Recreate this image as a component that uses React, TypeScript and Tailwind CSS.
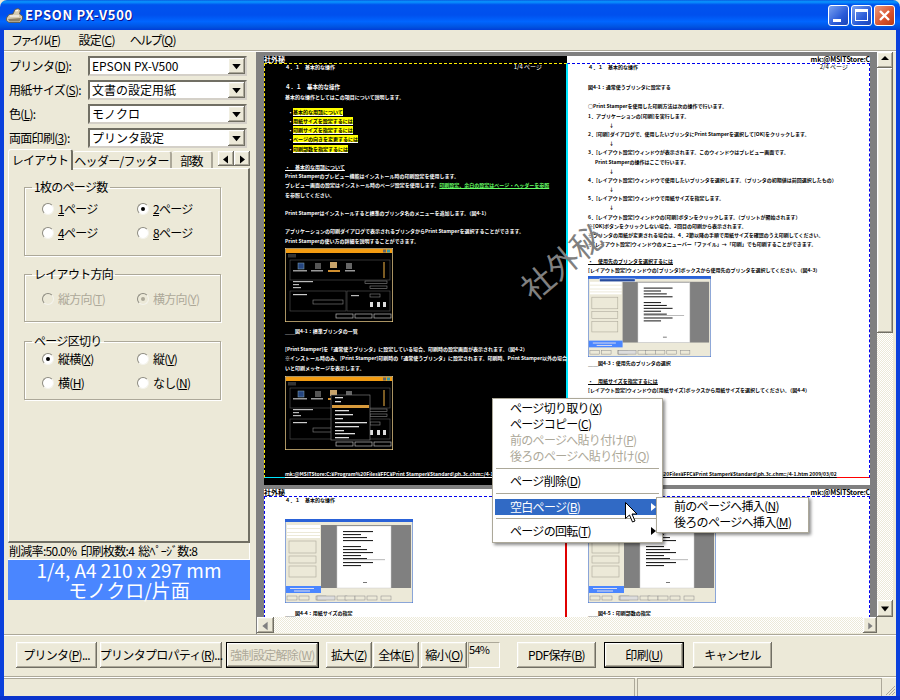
import React from 'react';

const raised = 'bg-[#ece9d8] shadow-[inset_-1px_-1px_#716f64,inset_1px_1px_#fff,inset_-2px_-2px_#aca899,inset_2px_2px_#f1efe2]';

const Combo: React.FC<{ label: React.ReactNode; value: string }> = ({ label, value }) => (
  <div className="flex items-center h-[20px] mb-[4px]">
    <div className="w-[80px] pl-[1px] text-[12px] whitespace-nowrap">{label}</div>
    <div className="w-[159px] h-[20px] flex items-center bg-white border-2 border-t-[#716f64] border-l-[#716f64] border-r-[#d4d0c8] border-b-[#d4d0c8]">
      <span className="flex-1 pl-[2px] text-[12px] leading-[16px] tracking-normal whitespace-nowrap">{value}</span>
      <Arrow dir="down" className="w-[17px] h-[16px]" />
    </div>
  </div>
);

const Arrow: React.FC<{ dir: 'up' | 'down' | 'left' | 'right'; className?: string; disabled?: boolean }> = ({ dir, className, disabled }) => {
  const pts = { up: '4,7 12,7 8,3', down: '4,5 12,5 8,10', left: '10,4 10,12 5,8', right: '6,4 6,12 11,8' }[dir];
  return (
    <div className={`${raised} shrink-0 ${className}`}>
      <svg viewBox="0 0 16 14" className="w-full h-full">
        <polygon points={pts} fill={disabled ? '#808080' : '#000'} />
      </svg>
    </div>
  );
};

const Radio: React.FC<{ on?: boolean; off?: boolean; children: React.ReactNode }> = ({ on, off, children }) => (
  <div className={`flex items-center h-[24px] text-[12px] whitespace-nowrap ${off ? 'text-[#aca899]' : ''}`}>
    <div className={`w-[12px] h-[12px] rounded-full border border-t-[#8d8b80] border-l-[#8d8b80] border-r-[#f4f3ec] border-b-[#f4f3ec] flex items-center justify-center mr-[4px] ${off ? 'bg-[#ece9d8]' : 'bg-white'}`}>
      {on && <div className={`w-[4px] h-[4px] rounded-full ${off ? 'bg-[#aca899]' : 'bg-black'}`} />}
    </div>
    <span>{children}</span>
  </div>
);

const Group: React.FC<{ title: string; className: string; children: React.ReactNode }> = ({ title, className, children }) => (
  <fieldset className={`w-[197px] ml-[15px] border border-[#aca899] shadow-[1px_1px_#fff,inset_1px_1px_#fff] ${className}`}>
    <legend className="ml-[7px] px-[2px] text-[12px] leading-[14px]">{title}</legend>
    {children}
  </fieldset>
);

const Btn: React.FC<{ className: string; disabled?: boolean; def?: boolean; children: React.ReactNode }> = ({ className, disabled, def, children }) => (
  <div className={`${raised} h-[26px] flex items-center justify-center text-[12px] whitespace-nowrap ${def ? 'border border-black' : ''} ${disabled ? 'text-[#aca899]' : ''} ${className}`}>
    {children}
  </div>
);

const Row: React.FC<{ className?: string; children?: React.ReactNode }> = ({ className = '', children }) => (
  <div className={`h-[9.2px] leading-[9.2px] text-[5px] tracking-normal font-bold whitespace-nowrap ${className}`}>{children}</div>
);

const Mark: React.FC<{ children: React.ReactNode }> = ({ children }) => (
  <Row><span className="text-white">・</span><span className="bg-[#ffff00] text-black border-b border-white">{children}</span></Row>
);

const DarkShot: React.FC<{ menu?: boolean }> = ({ menu }) => (
  <svg viewBox="0 0 108 74" className="w-[108px] h-[74px] shrink-0 block">
    <rect width="108" height="74" fill="#000" stroke="#f1d28d" strokeWidth="1.4" />
    <rect x="1" y="1" width="106" height="4" fill="#f39c12" />
    <rect x="98" y="1.5" width="3" height="3" fill="#666" />
    <rect x="102" y="1.5" width="3" height="3" fill="#39a" />
    <rect x="3" y="6" width="8" height="3.5" fill="#333" />
    <rect x="5" y="12" width="100" height="20" fill="none" stroke="#555" strokeWidth="0.6" />
    <rect x="13" y="15" width="6" height="6" fill="#25457f" stroke="#8ab" strokeWidth="0.5" />
    <rect x="30" y="15" width="6" height="6" fill="#555" />
    <rect x="45" y="14" width="7" height="6" fill="#c8a36a" />
    <rect x="43" y="22" width="12" height="2" fill="#d18f2f" />
    <rect x="61" y="15" width="6" height="6" fill="#666" />
    <rect x="98" y="14" width="2" height="16" fill="#7b5b22" />
    <rect x="8" y="22" width="14" height="1.5" fill="#999" />
    <rect x="26" y="22" width="12" height="1.5" fill="#999" />
    <rect x="60" y="22" width="10" height="1.5" fill="#999" />
    <rect x="8" y="33" width="20" height="1.2" fill="#bbb" />
    <rect x="8" y="36" width="6" height="1.2" fill="#bbb" />
    <rect x="8" y="39" width="8" height="1.2" fill="#bbb" />
    <rect x="80" y="33" width="22" height="2.6" fill="none" stroke="#888" strokeWidth="0.6" />
    <rect x="85" y="38" width="17" height="2.6" fill="none" stroke="#888" strokeWidth="0.6" />
    <rect x="5" y="43" width="56" height="20" fill="none" stroke="#555" strokeWidth="0.6" />
    <rect x="62" y="43" width="43" height="20" fill="none" stroke="#555" strokeWidth="0.6" />
    <rect x="8" y="46" width="14" height="1.2" fill="#ccc" />
    <rect x="28" y="52" width="30" height="4" fill="none" stroke="#888" strokeWidth="0.6" />
    <rect x="66" y="47" width="8" height="1.2" fill="#bbb" />
    <rect x="85" y="46" width="10" height="3" fill="none" stroke="#888" strokeWidth="0.6" />
    <rect x="85" y="54" width="3" height="5" fill="#ddd" />
    <rect x="92" y="54" width="3" height="5" fill="#ddd" />
    <rect x="98" y="54" width="3" height="5" fill="#ddd" />
    <rect x="51" y="66" width="17" height="4" fill="none" stroke="#bbb" strokeWidth="0.7" />
    <rect x="70" y="66" width="17" height="4" fill="none" stroke="#bbb" strokeWidth="0.7" />
    <rect x="89" y="66" width="17" height="4" fill="none" stroke="#bbb" strokeWidth="0.7" />
    {menu && (
      <g>
        <rect x="46" y="19" width="39" height="45" fill="#000" stroke="#888" strokeWidth="0.6" />
        <rect x="47" y="29" width="37" height="3" fill="#d89a3c" />
        <rect x="50" y="21" width="8" height="1.3" fill="#ddd" />
        <rect x="50" y="25" width="6" height="1.3" fill="#ddd" />
        <rect x="50" y="34" width="14" height="1.3" fill="#ddd" />
        <rect x="50" y="38" width="18" height="1.3" fill="#ddd" />
        <rect x="50" y="42" width="8" height="1.3" fill="#ddd" />
        <rect x="50" y="46" width="32" height="1.3" fill="#ddd" />
        <rect x="50" y="50" width="24" height="1.3" fill="#ddd" />
        <rect x="50" y="54" width="9" height="1.3" fill="#ddd" />
        <rect x="50" y="57" width="20" height="1.3" fill="#ddd" />
        <rect x="50" y="61" width="14" height="1.3" fill="#ddd" />
      </g>
    )}
  </svg>
);

const LightShot: React.FC<{ w: string; menu?: boolean }> = ({ w, menu }) => (
  <svg viewBox="0 0 128 84" preserveAspectRatio="none" className={`${w} shrink-0 block`}>
    <rect width="128" height="84" fill="#ece9d8" />
    <rect width="128" height="3" fill="#2a62d8" />
    <rect x="0" y="0" width="128" height="84" fill="none" stroke="#2a62d8" strokeWidth="1" />
    <rect x="36" y="6" width="90" height="63" fill="#808080" />
    <rect x="52" y="7" width="54" height="62" fill="#fff" stroke="#ccc" strokeWidth="0.5" />
    {[12, 15, 18, 21, 27, 30, 33, 36, 39, 43, 46].map((y, i) => (
      <rect key={y} x="58" y={y} width={i % 3 === 0 ? 30 : i % 3 === 1 ? 18 : 24} height="1.1" fill="#222" />
    ))}
    <rect x="58" y="40.5" width="42" height="0.6" fill="#888" />
    <rect x="78" y="63" width="4" height="0.8" fill="#555" />
    <rect x="2" y="6" width="33" height="3" fill="#fff" />
    <rect x="2" y="10" width="33" height="3" fill="#fff" />
    <rect x="2" y="14" width="33" height="2" fill="#fff" />
    <rect x="2" y="17" width="33" height="2" fill="#fff" />
    <rect x="4" y="22" width="27" height="12" fill="none" stroke="#aca899" strokeWidth="0.6" />
    <rect x="4" y="37" width="27" height="7" fill="none" stroke="#aca899" strokeWidth="0.6" />
    <rect x="4" y="47" width="27" height="11" fill="none" stroke="#aca899" strokeWidth="0.6" />
    <rect x="1" y="67" width="35" height="7" fill="#4a86ff" />
    <rect x="5" y="69" width="24" height="1" fill="#dde" />
    <rect x="9" y="71.5" width="16" height="1" fill="#dde" />
    {[2, 14, 31, 32, 52, 60, 70, 82, 96].map((x, i) => (
      <rect key={x} x={x} y="77" width={i === 3 ? 18 : 10} height="4" fill={i === 3 ? '#ddd' : '#ece9d8'} stroke="#888" strokeWidth="0.5" />
    ))}
    {menu && <rect x="12" y="3" width="37" height="3" fill="#264a9c" stroke="#fff" strokeWidth="0.5" />}
  </svg>
);

const Item: React.FC<{ off?: boolean; active?: boolean; sub?: boolean; children: React.ReactNode }> = ({ off, active, sub, children }) => (
  <div className={`relative h-[16px] flex items-center pl-[15px] text-[12px] whitespace-nowrap ${off ? 'text-[#aca899]' : ''} ${active ? 'bg-[#316ac5] text-white' : ''}`}>
    {children}
    {sub && (
      <svg viewBox="0 0 5 8" className="absolute right-[4px] top-[4px] w-[5px] h-[8px]">
        <polygon points="0,0 5,4 0,8" fill={active ? '#fff' : '#000'} />
      </svg>
    )}
  </div>
);

const Sep: React.FC<{ className: string }> = ({ className }) => <div className={`h-px bg-[#aca899] mx-[1px] ${className}`} />;

const FOOT = 'mk:@MSITStore:C:¥Program%20Files¥FFC¥Print Stamper¥Standard\\ph.3c.chm::/4-1.htm  2009/03/02';

export default function App() {
  return (
    <div className="relative w-[900px] h-[700px] overflow-hidden flex flex-col bg-[#ece9d8] text-black tracking-[-0.7px] font-['Noto_Sans_CJK_JP','Liberation_Sans',sans-serif]">
      {/* title bar */}
      <div className="h-[30px] shrink-0 flex items-center pl-[6px] pr-[5px] rounded-t-[7px] bg-[linear-gradient(#0a5ce0_0%,#0997ff_6%,#0053ee_16%,#0050ee_50%,#0066ff_72%,#0053e0_90%,#003dd7_100%)]">
        <svg viewBox="0 0 17 15" className="w-[17px] h-[15px] mr-[2px]">
          <path d="M0.5 10 L3 6.5 L7 6 L9 1.5 L12 0.5 L14.5 2 L13.5 6 L16.5 8 L16.5 11 L14 14.5 L3 14.5 L0.5 12.5 Z" fill="#d6cbb0" stroke="#5b513c" strokeWidth="0.8" />
          <path d="M2 11 L15 10 L13.5 13.5 L3.5 13.5 Z" fill="#8c8066" />
          <path d="M4 8 L13 8 M9.5 3 L12 2.5" stroke="#fff" strokeWidth="1.2" />
        </svg>
        <span className="text-[13px] font-bold text-white tracking-[0.7px] [text-shadow:1px_1px_#0f1089]">EPSON PX-V500</span>
        <div className="ml-auto flex gap-[2px]">
          <div className="w-[21px] h-[21px] rounded-[3px] border border-white bg-[linear-gradient(135deg,#7ba2f0,#2a5bd8_60%,#1a44b8)] flex items-end pl-[4px] pb-[3px]">
            <div className="w-[8px] h-[3px] bg-white" />
          </div>
          <div className="w-[21px] h-[21px] rounded-[3px] border border-white bg-[linear-gradient(135deg,#7ba2f0,#2a5bd8_60%,#1a44b8)] flex items-center justify-center">
            <div className="w-[13px] h-[12px] border border-white border-t-[3px]" />
          </div>
          <div className="w-[21px] h-[21px] rounded-[3px] border border-white bg-[linear-gradient(135deg,#eb9a7c,#d9512c_60%,#b83a15)] flex items-center justify-center">
            <svg viewBox="0 0 13 13" className="w-[13px] h-[13px]">
              <path d="M2 2 L11 11 M11 2 L2 11" stroke="#fff" strokeWidth="2.4" />
            </svg>
          </div>
        </div>
      </div>

      <div className="flex-1 min-h-0 flex flex-col border-x-4 border-[#0a40dc]">
        {/* menu */}
        <div className="h-[20px] shrink-0 flex items-center text-[12px]">
          <span className="ml-[7px]"><span className="tracking-[-2.8px]">ファイル</span>(<u>F</u>)</span>
          <span className="ml-[18px]">設定(<u>C</u>)</span>
          <span className="ml-[15px]"><span className="tracking-[-1.6px]">ヘルプ</span>(<u>Q</u>)</span>
        </div>
        <div className="h-[2px] shrink-0 border-t border-[#aca899] border-b border-b-white" />

        <div className="h-[582px] shrink-0 flex">
          {/* left column */}
          <div className="w-[253px] shrink-0 pt-[4px] pl-[4px] border-r border-[#808080]">
            <Combo label={<>プリンタ(<u>D</u>):</>} value="EPSON PX-V500" />
            <Combo label={<>用紙サイズ(<u>S</u>):</>} value="文書の設定用紙" />
            <Combo label={<>色(<u>L</u>):</>} value="モノクロ" />
            <Combo label={<>両面印刷(<u>3</u>):</>} value="プリンタ設定" />

            <div className="w-[242px] -mt-[3px] h-[19px] flex items-end text-[12px]">
              <div className="relative z-10 w-[65px] h-[21px] -mb-[2px] pt-[1px] text-center rounded-t-[3px] bg-[#ece9d8] border-l border-t border-white border-r-2 border-r-[#716f64]">レイアウト</div>
              <div className="w-[99px] h-[17px] text-center leading-[17px] rounded-t-[3px] border-t border-white border-r-2 border-r-[#aca899] whitespace-nowrap">ヘッダー/フッター</div>
              <div className="w-[41px] h-[17px] text-center leading-[17px] rounded-t-[3px] border-t border-white border-r-2 border-r-[#aca899]">部数</div>
              <div className="ml-auto self-start mt-[2px] flex">
                <Arrow dir="left" className="w-[16px] h-[15px]" />
                <Arrow dir="right" className="w-[16px] h-[15px]" />
              </div>
            </div>

            <div className="w-[242px] h-[375px] pt-[11px] border-t border-l border-white border-r-2 border-r-[#716f64] border-b-2 border-b-[#716f64]">
              <Group title="1枚のページ数" className="h-[76px]">
                <div className="grid grid-cols-[95px_1fr] pl-[17px] pt-[3px]">
                  <Radio><u>1</u>ページ</Radio>
                  <Radio on><u>2</u>ページ</Radio>
                  <Radio><u>4</u>ページ</Radio>
                  <Radio><u>8</u>ページ</Radio>
                </div>
              </Group>
              <Group title="レイアウト方向" className="h-[55px] mt-[11px]">
                <div className="grid grid-cols-[95px_1fr] pl-[17px] pt-[6px]">
                  <Radio off>縦方向(<u>T</u>)</Radio>
                  <Radio off on>横方向(<u>Y</u>)</Radio>
                </div>
              </Group>
              <Group title="ページ区切り" className="h-[66px] mt-[12px]">
                <div className="grid grid-cols-[95px_1fr] pl-[17px] -mt-[1px]">
                  <Radio on>縦横(<u>X</u>)</Radio>
                  <Radio>縦(<u>V</u>)</Radio>
                  <Radio>横(<u>H</u>)</Radio>
                  <Radio>なし(<u>N</u>)</Radio>
                </div>
              </Group>
            </div>

            <div className="w-[242px] h-[17px] pl-[1px] leading-[16px] text-[12px] whitespace-nowrap border-b border-r border-white">削減率:50.0%&nbsp;&nbsp;印刷枚数:4&nbsp;&nbsp;総ﾍﾟｰｼﾞ数:8</div>
            <div className="w-[242px] h-[40px] bg-[#4a86ff] text-white text-center text-[19px] leading-[20px] tracking-normal whitespace-nowrap">
              <div>1/4, A4 210 x 297 mm</div>
              <div>モノクロ/片面</div>
            </div>
          </div>

          {/* preview and scroll bars */}
          <div className="flex-1 min-w-0 flex flex-col">
            <div className="flex h-[565px]">
              <div className="w-[620px] h-[565px] pt-[4px] pl-[7px] bg-[#808080] overflow-hidden">
                <div className="w-[606px] grid grid-cols-[303px_303px] grid-rows-[429px_129px] gap-y-[4px]">
                  {/* page 1 */}
                  <div className="bg-black text-white flex flex-col">
                    <div className="h-[7px] leading-[7px] text-[7px] tracking-normal font-bold whitespace-nowrap">社外秘</div>
                    <div className="h-[415px] pl-[20px] pr-[21px] flex flex-col border-t border-l border-dashed border-t-[#ffee00] border-l-[#ffee00] border-r border-r-[#00e5ff] border-b border-b-[#00e5ff] [border-right-style:solid] [border-bottom-style:solid]">
                      <Row className="!h-[6px] !leading-[6px] flex justify-between pr-[3px]"><span>４．１　基本的な操作</span><span className="font-normal text-[6px]">1/4 ページ</span></Row>
                      <Row className="mt-[13px] !text-[5.5px]">４．１　基本的な操作</Row>
                      <Row>基本的な操作としてはこの項目について説明します。</Row>
                      <div className="mt-[5.5px] pl-[3px]">
                        <Mark>基本的な用語について</Mark>
                        <Mark>用紙サイズを設定するには</Mark>
                        <Mark>印刷サイズを指定するには</Mark>
                        <Mark>ページの向きを変更するには</Mark>
                        <Mark>印刷部数を指定するには</Mark>
                      </div>
                      <Row className="mt-[9.2px] self-start underline">・　基本的な用語について</Row>
                      <Row>Print Stamperのプレビュー機能はインストール時の印刷設定を使用します。</Row>
                      <Row>プレビュー画面の設定はインストール時のページ設定を使用します。<span className="text-[#66ff66] underline">印刷設定、余白の設定はページ・ヘッダーを参照</span></Row>
                      <Row>を参照してください。</Row>
                      <Row className="mt-[9.2px]">Print Stamperはインストールすると標準のプリンタ名のメニューを追加します。（図4-1）</Row>
                      <Row className="mt-[9.2px]">アプリケーションの印刷ダイアログで表示されるプリンタからPrint Stamperを選択することができます。</Row>
                      <Row>Print Stamperの使い方の詳細を説明することができます。</Row>
                      <div className="mt-[3.8px]"><DarkShot /></div>
                      <Row className="mt-[3.4px]">＿＿図4-1：標準プリンタの一覧</Row>
                      <Row className="mt-[9.2px]">[Print Stamper]を「通常使うプリンタ」に設定している場合、印刷時の設定画面が表示されます。（図4-2）</Row>
                      <Row>※インストール時のみ、[Print Stamper]印刷時の「通常使うプリンタ」に設定されます。印刷時、Print Stamper以外の場合には</Row>
                      <Row>いと印刷メッセージを表示します。</Row>
                      <div className="mt-[4.6px]"><DarkShot menu /></div>
                      <Row className="mt-auto !h-[6px] !leading-[6px] underline">{FOOT}</Row>
                    </div>
                  </div>

                  {/* page 2 */}
                  <div className="bg-white flex flex-col">
                    <div className="h-[7px] leading-[7px] text-[7px] tracking-[-0.2px] font-bold text-right whitespace-nowrap">mk:@MSITStore:C</div>
                    <div className="h-[415px] pl-[20px] pr-[21px] flex flex-col border-t border-r border-dashed border-t-[#0000ee] border-r-[#0000ee] border-l border-l-[#00e5ff] border-b border-b-[#ff0000] [border-left-style:solid] [border-bottom-style:solid]">
                      <Row className="!h-[6px] !leading-[6px] flex justify-between"><span>４．１　基本的な操作</span><span className="font-normal text-[6px]">2/4 ページ</span></Row>
                      <Row className="mt-[12.4px]">図4-1：通常使うプリンタに設定する</Row>
                      <Row className="mt-[9.8px]">○Print Stamperを使用した印刷方法は次の操作で行います。</Row>
                      <Row>1．アプリケーションの[印刷]を実行します。</Row>
                      <Row className="pl-[21px]">↓</Row>
                      <Row>2．[印刷]ダイアログで、使用したいプリンタにPrint Stamperを選択して[OK]をクリックします。</Row>
                      <Row className="pl-[21px]">↓</Row>
                      <Row>3．[レイアウト設定]ウィンドウが表示されます。このウィンドウはプレビュー画面です。</Row>
                      <Row className="pl-[7px]">Print Stamperの操作はここで行います。</Row>
                      <Row className="pl-[21px]">↓</Row>
                      <Row>4．[レイアウト設定]ウィンドウで使用したいプリンタを選択します。（プリンタの初期値は前回選択したもの）</Row>
                      <Row className="pl-[21px]">↓</Row>
                      <Row>5．[レイアウト設定]ウィンドウで用紙サイズを指定します。</Row>
                      <Row className="pl-[21px]">↓</Row>
                      <Row>6．[レイアウト設定]ウィンドウの[印刷]ボタンをクリックします。（プリントが開始されます）</Row>
                      <Row>※[OK]ボタンをクリックしない場合、2回目の印刷から表示されます。</Row>
                      <Row>※プリンタの用紙が変更される場合は、4．2節以降の手順で用紙サイズを確認のうえ印刷してください。</Row>
                      <Row>※[レイアウト設定]ウィンドウのメニューバー「ファイル」→「印刷」でも印刷することができます。</Row>
                      <Row className="mt-[7.8px] self-start underline">・　使用先のプリンタを選択するには</Row>
                      <Row>[レイアウト設定]ウィンドウの[プリンタ]ボックスから使用先のプリンタを選択してください。（図4-3）</Row>
                      <div className="mt-[1.2px]"><LightShot w="w-[123px] h-[81px]" menu /></div>
                      <Row className="mt-[1.4px]">＿＿図4-3：使用先のプリンタの選択</Row>
                      <Row className="mt-[8.8px] self-start underline">・　用紙サイズを指定するには</Row>
                      <Row>[レイアウト設定]ウィンドウの[用紙サイズ]ボックスから用紙サイズを選択してください。（図4-4）</Row>
                      <Row className="mt-auto !h-[6px] !leading-[6px] underline">{FOOT}</Row>
                    </div>
                  </div>

                  {/* page 3 */}
                  <div className="bg-white flex flex-col">
                    <div className="h-[7px] leading-[7px] text-[7px] tracking-normal font-bold whitespace-nowrap">社外秘</div>
                    <div className="flex-1 pl-[20px] flex flex-col border-t border-l border-dashed border-[#0000ee] border-r-2 border-r-[#e00000] [border-right-style:solid]">
                      <Row className="!h-[6px] !leading-[6px]">４．１　基本的な操作</Row>
                      <div className="mt-[16px]"><LightShot w="w-[128px] h-[84px]" /></div>
                      <Row className="mt-[5.4px]">＿＿図4-4：用紙サイズの指定</Row>
                    </div>
                  </div>

                  {/* page 4 */}
                  <div className="bg-white flex flex-col">
                    <div className="h-[7px] leading-[7px] text-[7px] tracking-[-0.2px] font-bold text-right whitespace-nowrap">mk:@MSITStore:C</div>
                    <div className="flex-1 pl-[21px] flex flex-col border-t border-r border-dashed border-[#0000ee]">
                      <Row className="!h-[6px] !leading-[6px]">４．１　基本的な操作</Row>
                      <div className="mt-[16px]"><LightShot w="w-[128px] h-[84px]" /></div>
                      <Row className="mt-[5.4px]">＿＿図4-5：印刷部数の指定</Row>
                    </div>
                  </div>
                </div>
              </div>

              {/* vertical scroll */}
              <div className="w-[16px] h-[565px] flex flex-col bg-[repeating-conic-gradient(#fff_0_25%,#ece9d8_0_50%)] bg-[length:2px_2px]">
                <Arrow dir="up" className="w-[16px] h-[16px]" />
                <div className={`${raised} h-[265px] shrink-0`} />
                <Arrow dir="down" className="w-[16px] h-[17px] mt-auto" />
              </div>
            </div>
            {/* horizontal scroll */}
            <div className="w-[620px] h-[16px] flex bg-[repeating-conic-gradient(#fff_0_25%,#ece9d8_0_50%)] bg-[length:2px_2px]">
              <Arrow dir="left" disabled className="w-[17px] h-[16px]" />
              <Arrow dir="right" disabled className="w-[14px] h-[16px] ml-auto" />
            </div>
          </div>
        </div>

        {/* buttons */}
        <div className="h-[2px] shrink-0 border-t border-[#aca899] border-b border-b-white" />
        <div className="h-[40px] shrink-0 flex items-start pt-[6px] pl-[12px]">
          <Btn className="w-[81px]">プリンタ(<u>P</u>)...</Btn>
          <Btn className="w-[122px] ml-[3px]">プリンタプロパティ(<u>R</u>)...</Btn>
          <Btn disabled def className="w-[93px] ml-[4px]">強制設定解除(<u>W</u>)</Btn>
          <Btn className="w-[46px] ml-[7px]">拡大(<u>Z</u>)</Btn>
          <Btn className="w-[46px] ml-px">全体(<u>E</u>)</Btn>
          <Btn className="w-[46px] ml-[2px]">縮小(<u>O</u>)</Btn>
          <div className="w-[32px] h-[26px] ml-[1px] text-[11px] leading-[13px] border border-t-[#aca899] border-l-[#aca899] border-r-white border-b-white">54%</div>
          <Btn className="w-[79px] ml-[17px]">PDF保存(<u>B</u>)</Btn>
          <Btn def className="w-[80px] ml-[8px]">印刷(<u>U</u>)</Btn>
          <Btn className="w-[79px] ml-[9px]">キャンセル</Btn>
        </div>
        {/* status bar */}
        <div className="flex-1 min-h-0 flex border-t border-[#aca899] pt-[1px] shadow-[inset_0_1px_#fff]">
          <div className="w-[631px] border-t border-[#aca899] border-r" />
          <div className="w-[2px]" />
          <div className="w-[245px] border-t border-l border-r border-[#aca899]" />
          <div className="flex-1 flex items-end justify-end">
            <svg viewBox="0 0 12 12" className="w-[12px] h-[12px]">
              <path d="M11 2 L2 11 M11 5 L5 11 M11 8 L8 11" stroke="#aca899" strokeWidth="1" />
            </svg>
          </div>
        </div>
      </div>
      <div className="h-[4px] shrink-0 bg-[#0a34cc]" />

      {/* watermark over the previews */}
      <div className="absolute left-[513px] top-[245px] -rotate-40 text-[32px] leading-none tracking-normal text-[#808080] whitespace-nowrap pointer-events-none">社外秘</div>

      {/* context menu */}
      <div className="absolute left-[492px] top-[398px] w-[171px] h-[145px] py-[1px] px-[2px] bg-white border border-[#aca899] shadow-[2px_2px_3px_rgba(0,0,0,0.45)]">
        <Item>ページ切り取り(<u>X</u>)</Item>
        <Item>ページコピー(<u>C</u>)</Item>
        <Item off>前のページへ貼り付け(<u>P</u>)</Item>
        <Item off>後ろのページへ貼り付け(<u>Q</u>)</Item>
        <Sep className="mt-[4px] mb-[4px]" />
        <Item>ページ削除(<u>D</u>)</Item>
        <Sep className="mt-[4px] mb-[5px]" />
        <Item active sub>空白ページ(<u>B</u>)</Item>
        <Sep className="mt-[3px] mb-[4px]" />
        <Item sub>ページの回転(<u>T</u>)</Item>
      </div>
      <div className="absolute left-[656px] top-[497px] w-[153px] h-[36px] px-[2px] bg-white border border-[#aca899] shadow-[2px_2px_3px_rgba(0,0,0,0.45)]">
        <Item>前のページへ挿入(<u>N</u>)</Item>
        <Item>後ろのページへ挿入(<u>M</u>)</Item>
      </div>
      <svg viewBox="0 0 13 21" className="absolute left-[625px] top-[502px] w-[13px] h-[21px]">
        <path d="M0.5 0.5 L0.5 16.5 L4.5 13 L7.5 20 L10 19 L7 12 L12 12 Z" fill="#fff" stroke="#000" strokeWidth="1" />
      </svg>
    </div>
  );
}
